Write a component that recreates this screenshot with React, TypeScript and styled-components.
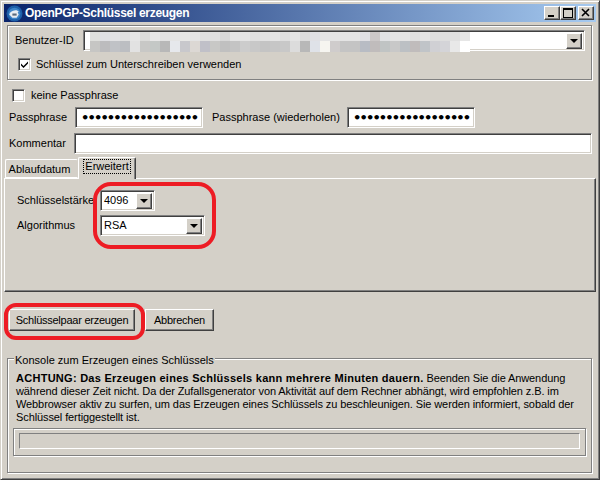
import React from 'react';
import styled, { createGlobalStyle } from 'styled-components';

const GlobalStyle = createGlobalStyle`
  html, body { margin: 0; padding: 0; background: #d4d0c8; }
`;

const sunken = `
  border: 1px solid;
  border-color: #808080 #fff #fff #808080;
  box-shadow: inset 1px 1px 0 #404040, inset -1px -1px 0 #d4d0c8;
`;

const raised = `
  background: #d4d0c8;
  border: 1px solid;
  border-color: #fff #404040 #404040 #fff;
  box-shadow: inset -1px -1px 0 #808080;
`;

const Window = styled.div`
  position: relative;
  box-sizing: border-box;
  width: 600px;
  height: 480px;
  padding: 4px;
  background: #d4d0c8;
  border: 1px solid;
  border-color: #d4d0c8 #404040 #404040 #d4d0c8;
  box-shadow: inset 1px 1px 0 #fff, inset -1px -1px 0 #808080;
  overflow: hidden;
  font-family: 'Liberation Sans', Arial, sans-serif;
  font-size: 11px;
  line-height: 13px;
  color: #000;
  display: flex;
  flex-direction: column;
`;

const TitleBar = styled.div`
  flex: none;
  height: 18px;
  margin: -1px -1px 0;
  display: flex;
  align-items: center;
  padding: 0 2px 0 2px;
  gap: 2px;
  background: linear-gradient(to right, #0a246a, #a6caf0);
`;

const Title = styled.span`
  flex: 1;
  color: #fff;
  font-size: 12px;
  font-weight: bold;
  letter-spacing: -0.3px;
`;

const TitleButtons = styled.div`
  display: flex;
`;

const TitleButton = styled.div<{ $gap?: number }>`
  ${raised}
  box-sizing: border-box;
  width: 16px;
  height: 14px;
  margin-left: ${p => p.$gap ?? 0}px;
  display: flex;
  align-items: center;
  justify-content: center;
`;

const Group = styled.div`
  position: relative;
  box-sizing: border-box;
  border: 1px solid #808080;
  box-shadow: inset 1px 1px 0 #fff, 1px 1px 0 #fff;
`;

const UserGroup = styled(Group)`
  margin: 3px 3px 0 2px;
  height: 55px;
  padding: 4px 6px 0 7px;
`;

const Row = styled.div<{ $top?: number; $left?: number }>`
  display: flex;
  align-items: center;
  margin-top: ${p => p.$top ?? 0}px;
  margin-left: ${p => p.$left ?? 0}px;
`;

const FieldLabel = styled.label<{ $width: number; $indent?: number }>`
  flex: none;
  box-sizing: border-box;
  width: ${p => p.$width}px;
  padding-left: ${p => p.$indent ?? 0}px;
  white-space: nowrap;
`;

const ComboBox = styled.div<{ $width: number }>`
  ${sunken}
  position: relative;
  box-sizing: border-box;
  width: ${p => p.$width}px;
  height: 21px;
  background: #fff;
  display: flex;
  align-items: center;
  justify-content: space-between;
  padding: 0 2px 0 3px;
  flex: none;
`;

const ComboButton = styled.div`
  ${raised}
  box-sizing: border-box;
  width: 16px;
  height: 16px;
  display: flex;
  align-items: center;
  justify-content: center;
`;

const Arrow = styled.div`
  width: 0;
  height: 0;
  border-left: 4px solid transparent;
  border-right: 4px solid transparent;
  border-top: 4px solid #000;
`;

const Mosaic = styled.div`
  position: absolute;
  left: 6px;
  top: 1px;
  display: grid;
  grid-template-columns: repeat(38, 10px);
  grid-auto-rows: 9px 11px;
`;

const MosaicCell = styled.div<{ $color: string }>`
  background: ${p => p.$color};
`;

const CheckBox = styled.div<{ $checked?: boolean }>`
  ${sunken}
  box-sizing: border-box;
  flex: none;
  width: 13px;
  height: 13px;
  background: #fff;
  display: flex;
  align-items: center;
  justify-content: center;
  margin-right: ${p => (p.$checked ? 5 : 6)}px;
`;

const TextField = styled.div<{ $width: number }>`
  ${sunken}
  box-sizing: border-box;
  flex: none;
  width: ${p => p.$width}px;
  height: 21px;
  background: #fff;
  padding: 0 0 0 5px;
  display: flex;
  align-items: center;
  overflow: hidden;
`;

const Dots = styled.span`
  font-family: 'DejaVu Sans', sans-serif;
  font-size: 13px;
  font-weight: bold;
  letter-spacing: -1.85px;
  line-height: 1;
  white-space: nowrap;
`;

const Tabs = styled.div`
  display: flex;
  align-items: flex-end;
  height: 21px;
  margin: 3px 0 0 0;
  position: relative;
  z-index: 1;
`;

const Tab = styled.div<{ $active?: boolean; $width: number }>`
  box-sizing: border-box;
  width: ${p => p.$width}px;
  height: ${p => (p.$active ? 22 : 19)}px;
  background: #d4d0c8;
  border: 1px solid;
  border-color: #fff #404040 transparent #fff;
  border-right-color: ${p => (p.$active ? '#404040' : '#d4d0c8')};
  border-bottom: ${p => (p.$active ? 'none' : '1px solid #fff')};
  border-radius: 2px 2px 0 0;
  box-shadow: ${p => (p.$active ? 'inset -1px 0 0 #808080' : 'none')};
  display: flex;
  justify-content: center;
  align-items: ${p => (p.$active ? 'flex-start' : 'center')};
  padding: ${p => (p.$active ? '2px 0 0 0' : '1px 4px 0 0')};
  margin-bottom: ${p => (p.$active ? -1 : 0)}px;
`;

const FocusText = styled.span`
  outline: 1px dotted #000;
  padding: 0 1px;
`;

const TabPane = styled.div`
  box-sizing: border-box;
  height: 114px;
  margin: 0 -1px;
  border: 1px solid;
  border-color: #fff #404040 #404040 #fff;
  box-shadow: inset -1px -1px 0 #808080;
  padding: 11px 0 0 12px;
  display: grid;
  grid-template-columns: 83px auto;
  grid-auto-rows: min-content;
  row-gap: 4px;
  align-items: center;
  justify-content: start;
`;

const Buttons = styled.div`
  display: flex;
  gap: 10px;
  margin: 17px 0 0 4px;
`;

const PushButton = styled.button<{ $width: number }>`
  ${raised}
  box-sizing: border-box;
  width: ${p => p.$width}px;
  height: 22px;
  padding: 0;
  font: inherit;
  letter-spacing: -0.25px;
  color: #000;
`;

const ConsoleGroup = styled(Group)`
  margin: 27px 3px 0 2px;
  height: 115px;
  padding: 13px 5px 0 8px;
`;

const Legend = styled.span`
  position: absolute;
  left: 6px;
  top: -5px;
  padding: 0 1px;
  background: #d4d0c8;
`;

const ConsoleText = styled.p`
  margin: 0;
  white-space: nowrap;
  letter-spacing: -0.1px;

  b {
    letter-spacing: 0.27px;
  }
`;

const ProgressFrame = styled.div`
  box-sizing: border-box;
  height: 28px;
  margin: 4px 0 0 -3px;
  border: 1px solid #808080;
  box-shadow: inset 1px 1px 0 #fff, 1px 1px 0 #fff;
  padding: 4px 5px;
`;

const ProgressTrack = styled.div`
  box-sizing: border-box;
  height: 16px;
  border: 1px solid;
  border-color: #808080 #fff #fff #808080;
`;

const RedRing = styled.div<{ $x: number; $y: number; $w: number; $h: number; $r: number }>`
  position: absolute;
  box-sizing: border-box;
  left: ${p => p.$x}px;
  top: ${p => p.$y}px;
  width: ${p => p.$w}px;
  height: ${p => p.$h}px;
  border: 4px solid #ed1c24;
  border-radius: ${p => p.$r}px;
  z-index: 2;
`;

const row1 = ['#dfe0dd', '#dfe0e4', '#e2e2e4', '#e0e0e0', '#e6e6e6', '#dcdcda', '#e8e8e8', '#e2e2e2', '#e4e4e4', '#e8e8e6', '#e4e4e4', '#e0e0e0', '#e0e0e0', '#d8d8d8', '#e4e4e4', '#e4e4e4', '#e0e0e0', '#e2e2e2', '#e4e4e4',
  '#dfdfdf', '#e4e4e4', '#dcdcdc', '#e0e0e4', '#e4e4e4', '#e4e4e4', '#e4e4e4', '#e4e4e4', '#e0e0e4', '#ccc8c8', '#e0e2e4', '#e4e4e4', '#e4e4e4', '#e0e0e0', '#e4e4e4', '#dedede', '#dedede', '#e0e0e0', '#e6e6e6'];
const row2 = ['#c6c6c4', '#bcbcbe', '#c0c2c6', '#bcbec2', '#e2e2e2', '#c8c8c6', '#c4c8c6', '#b8b8b8', '#e6e8ec', '#c8c8cc', '#dcd8d4', '#c0c0c8', '#c8c8c6', '#c0c0c0', '#c4c4c4', '#cccccc', '#c8c8c8', '#c4c4c4', '#c6c6c6',
  '#c8c8c8', '#dcdcdc', '#b8b8b8', '#dfe2e8', '#f6f5f0', '#cfcccc', '#c4c4c4', '#c4c4c4', '#b8bcc4', '#c0bcbc', '#c0c4c4', '#c8c8c8', '#bcc0c4', '#c0bcbc', '#c0c4c8', '#d0d0d4', '#d4d4d8', '#e8e8e8', '#ffffff'];

const DOTS = '•'.repeat(18);

const AppIcon = () => (
  <svg width="17" height="17" viewBox="0 0 16 16">
    <circle cx="8" cy="8" r="7.5" fill="#1d5fa8" />
    <circle cx="8" cy="8" r="5.5" fill="#3f86c9" />
    <path d="M3 9c1-3 4-4 7-4l2 1-1 1 1 2-2 3H6L3 9z" fill="#e8edf2" />
    <path d="M6 8h4v2H6z" fill="#5b6a7c" />
  </svg>
);

export default function App() {
  return (
    <>
      <GlobalStyle />
      <Window>
        <TitleBar>
          <AppIcon />
          <Title>OpenPGP-Schlüssel erzeugen</Title>
          <TitleButtons>
            <TitleButton>
              <svg width="10" height="10" viewBox="0 0 10 10"><path d="M1 7h6v2H1z" fill="#000" /></svg>
            </TitleButton>
            <TitleButton>
              <svg width="10" height="10" viewBox="0 0 10 10"><path d="M0 0h10v10H0z M1 2v7h8V2z" fill="#000" fillRule="evenodd" /></svg>
            </TitleButton>
            <TitleButton $gap={2}>
              <svg width="10" height="10" viewBox="0 0 10 10"><path d="M1 1l7 7M8 1L1 8" stroke="#000" strokeWidth="1.6" fill="none" /></svg>
            </TitleButton>
          </TitleButtons>
        </TitleBar>

        <UserGroup>
          <Row>
            <FieldLabel $width={68}>Benutzer-ID</FieldLabel>
            <ComboBox $width={502}>
              <Mosaic>
                {row1.concat(row2).map((color, i) => (
                  <MosaicCell key={i} $color={color} />
                ))}
              </Mosaic>
              <span />
              <ComboButton><Arrow /></ComboButton>
            </ComboBox>
          </Row>
          <Row $top={7} $left={3}>
            <CheckBox $checked>
              <svg width="9" height="9" viewBox="0 0 9 9"><path d="M1 3.5l2.5 2.5L8 1.5v2L3.5 8 1 5.5z" fill="#000" /></svg>
            </CheckBox>
            <span>Schlüssel zum Unterschreiben verwenden</span>
          </Row>
        </UserGroup>

        <Row $top={9} $left={7}>
          <CheckBox />
          <span>keine Passphrase</span>
        </Row>
        <Row $top={5} $left={4}>
          <FieldLabel $width={66}>Passphrase</FieldLabel>
          <TextField $width={128}><Dots>{DOTS}</Dots></TextField>
          <FieldLabel $width={144} $indent={9}>Passphrase (wiederholen)</FieldLabel>
          <TextField $width={128}><Dots>{DOTS}</Dots></TextField>
        </Row>
        <Row $top={5} $left={4}>
          <FieldLabel $width={65}>Kommentar</FieldLabel>
          <TextField $width={518} />
        </Row>

        <Tabs>
          <Tab $width={73}>Ablaufdatum</Tab>
          <Tab $active $width={58}><FocusText>Erweitert</FocusText></Tab>
        </Tabs>
        <TabPane>
          <FieldLabel $width={83}>Schlüsselstärke</FieldLabel>
          <ComboBox $width={55}>
            <span>4096</span>
            <ComboButton><Arrow /></ComboButton>
          </ComboBox>
          <FieldLabel $width={83}>Algorithmus</FieldLabel>
          <ComboBox $width={105}>
            <span>RSA</span>
            <ComboButton><Arrow /></ComboButton>
          </ComboBox>
        </TabPane>

        <Buttons>
          <PushButton $width={126}>Schlüsselpaar erzeugen</PushButton>
          <PushButton $width={69}>Abbrechen</PushButton>
        </Buttons>

        <ConsoleGroup>
          <Legend>Konsole zum Erzeugen eines Schlüssels</Legend>
          <ConsoleText>
            <b>ACHTUNG: Das Erzeugen eines Schlüssels kann mehrere Minuten dauern.</b> Beenden Sie die Anwendung<br />
            während dieser Zeit nicht. Da der Zufallsgenerator von Aktivität auf dem Rechner abhängt, wird empfohlen z.B. im<br />
            Webbrowser aktiv zu surfen, um das Erzeugen eines Schlüssels zu beschleunigen. Sie werden informiert, sobald der<br />
            Schlüssel fertiggestellt ist.
          </ConsoleText>
          <ProgressFrame>
            <ProgressTrack />
          </ProgressFrame>
        </ConsoleGroup>

        <RedRing $x={92} $y={181} $w={123} $h={67} $r={18} />
        <RedRing $x={3} $y={302} $w={141} $h={37} $r={12} />
      </Window>
    </>
  );
}
